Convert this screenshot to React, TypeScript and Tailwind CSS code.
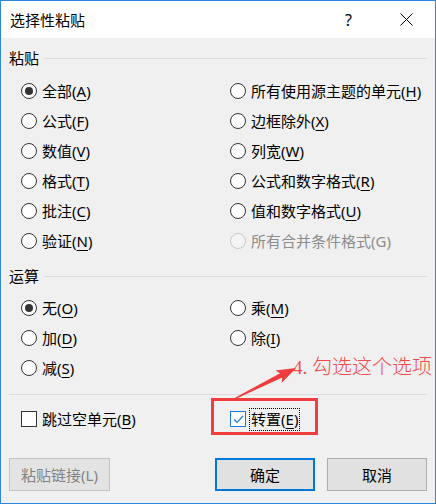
import React from "react";

const cx = (...c: (string | false | undefined)[]) => c.filter(Boolean).join(" ");

interface ItemProps {
  text: string;
  hot: string;
  checked?: boolean;
  disabled?: boolean;
}

// label with access key underlined
function Label({ text, hot, disabled }: ItemProps) {
  return (
    <span
      className={cx(
        "text-[15px] leading-[20px] whitespace-nowrap",
        disabled ? "text-[#8c8c8c]" : "text-black"
      )}
    >
      {text}(
      <span className={disabled ? "" : "underline underline-offset-[3px] decoration-1"}>{hot}</span>)
    </span>
  );
}

function Radio(props: ItemProps) {
  const { checked, disabled } = props;
  return (
    <div className="flex items-center h-[30px]">
      <span
        className={cx(
          "w-[16px] h-[16px] rounded-full border flex items-center justify-center shrink-0",
          disabled ? "border-[#c8c8c8] bg-[#f4f4f4]" : "border-[#333333] bg-white"
        )}
      >
        {checked && <span className="w-[8px] h-[8px] rounded-full bg-[#333333]" />}
      </span>
      <span className="ml-[5px]">
        <Label {...props} />
      </span>
    </div>
  );
}

function Group({ title }: { title: string }) {
  return (
    <div className="flex items-center h-[20px]">
      <span className="text-[15px] leading-[20px]">{title}</span>
      <span className="ml-[5px] flex-1 h-px bg-[#dcdcdc]" />
    </div>
  );
}

function CheckBox({ checked }: { checked?: boolean }) {
  return (
    <span
      className={cx(
        "w-[16px] h-[16px] border flex items-center justify-center bg-white shrink-0",
        checked ? "border-[#1c7ad5]" : "border-[#333333]"
      )}
    >
      {checked && (
        <svg width="11" height="9" viewBox="0 0 11 9">
          <path d="M1 4.5 L4 7.5 L10 1" fill="none" stroke="#1c7ad5" strokeWidth="1.2" />
        </svg>
      )}
    </span>
  );
}

const pasteLeft: ItemProps[] = [
  { text: "全部", hot: "A", checked: true },
  { text: "公式", hot: "F" },
  { text: "数值", hot: "V" },
  { text: "格式", hot: "T" },
  { text: "批注", hot: "C" },
  { text: "验证", hot: "N" },
];

const pasteRight: ItemProps[] = [
  { text: "所有使用源主题的单元", hot: "H" },
  { text: "边框除外", hot: "X" },
  { text: "列宽", hot: "W" },
  { text: "公式和数字格式", hot: "R" },
  { text: "值和数字格式", hot: "U" },
  { text: "所有合并条件格式", hot: "G", disabled: true },
];

export default function App() {
  return (
    <div className="relative w-[436px] h-[504px] border border-[#2b88d8] bg-[#f0f0f0] flex flex-col font-['Noto_Sans','Noto_Sans_CJK_SC',sans-serif] text-black">
      {/* title bar */}
      <div className="h-[37px] bg-white flex items-center pl-[9px] shrink-0">
        <span className="text-[15px] leading-[20px]">选择性粘贴</span>
        <span className="ml-auto w-[57px] flex justify-center text-[16px] leading-[20px]">?</span>
        <span className="w-[58px] flex justify-center">
          <svg width="13" height="13" viewBox="0 0 13 13">
            <path d="M0.5 0.5 L12.5 12.5 M12.5 0.5 L0.5 12.5" stroke="#000" strokeWidth="1" />
          </svg>
        </span>
      </div>

      <div className="flex-1 px-[8px] flex flex-col">
        <div className="mt-[10px]">
          <Group title="粘贴" />
        </div>
        <div className="mt-[8px] pl-[12px] grid grid-cols-[209px_1fr]">
          <div className="flex flex-col">
            {pasteLeft.map((it) => (
              <Radio key={it.hot} {...it} />
            ))}
          </div>
          <div className="flex flex-col">
            {pasteRight.map((it) => (
              <Radio key={it.hot} {...it} />
            ))}
          </div>
        </div>

        <div className="mt-[10px]">
          <Group title="运算" />
        </div>
        <div className="mt-[7px] pl-[12px] grid grid-cols-[209px_1fr]">
          <div className="flex flex-col">
            <Radio text="无" hot="O" checked />
            <Radio text="加" hot="D" />
            <Radio text="减" hot="S" />
          </div>
          <div className="flex flex-col">
            <Radio text="乘" hot="M" />
            <Radio text="除" hot="I" />
          </div>
        </div>

        <div className="mt-[11px] h-px bg-[#dcdcdc]" />

        <div className="mt-[9px] pl-[12px] grid grid-cols-[209px_1fr]">
          <div className="flex items-center h-[30px]">
            <CheckBox />
            <span className="ml-[5px]">
              <Label text="跳过空单元" hot="B" />
            </span>
          </div>
          <div className="flex items-center h-[30px]">
            <CheckBox checked />
            <span className="ml-[3px] border border-dotted border-black px-[1px] h-[23px] flex items-center">
              <Label text="转置" hot="E" />
            </span>
          </div>
        </div>

        <div className="mt-[24px] flex items-center">
          <button
            type="button"
            className="w-[101px] h-[33px] border border-[#c4c4c4] bg-[#e3e3e3] text-[15px] leading-[20px] text-[#838383]"
          >
            粘贴链接(L)
          </button>
          <button
            type="button"
            className="ml-auto w-[100px] h-[33px] border-2 border-[#0078d7] bg-[#e1e1e1] text-[15px] leading-[20px]"
          >
            确定
          </button>
          <button
            type="button"
            className="ml-[12px] w-[100px] h-[33px] border border-[#adadad] bg-[#e1e1e1] text-[15px] leading-[20px]"
          >
            取消
          </button>
        </div>
      </div>

      {/* annotation overlay */}
      <div className="absolute left-[210px] top-[397px] w-[107px] h-[37px] border-[3px] border-[#f23d3d]" />
      <svg className="absolute left-[224px] top-[359px]" width="80" height="45" viewBox="0 0 80 45">
        <polygon
          points="6.8,39.6 55.1,13.2 50.4,10.5 71,8 56.6,23.1 57.3,17.6 7.2,40.4"
          fill="#f03c3c"
        />
      </svg>
      <div className="absolute left-[292px] top-[355px] whitespace-nowrap leading-[20px] text-[#f04a4a]">
        <span className="text-[19px] font-['Liberation_Serif',serif]">4. </span>
        <span className="text-[20px] font-['Noto_Sans_CJK_SC',sans-serif] font-light">勾选这个选项</span>
      </div>
    </div>
  );
}
